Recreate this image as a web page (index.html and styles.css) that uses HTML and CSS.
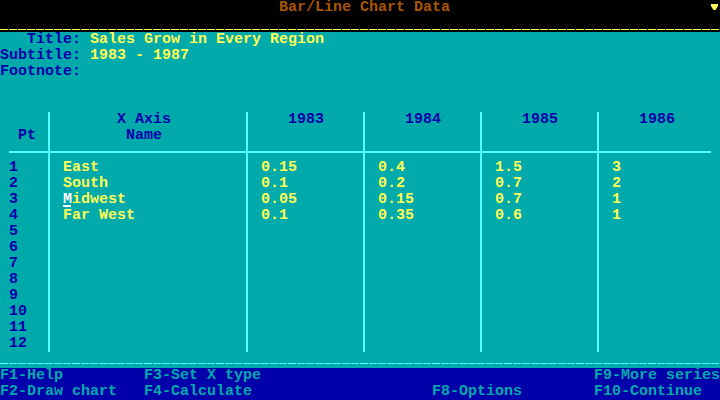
FILE: index.html
```
<!DOCTYPE html>
<html>
<head>
<meta charset="utf-8">
<link rel="stylesheet" href="styles.css">
</head>
<body>
<div class="screen">
  <header class="topbar">
    <div class="line title-line"><span class="app-title">                               Bar/Line Chart Data</span><svg class="more-arrow" width="9" height="16" viewBox="0 0 9 16"><path d="M0 4 H7 V6 L4.5 10 H2.5 L0 6 Z" fill="#ffff55"/></svg></div>
    <div class="line dash-yellow"></div>
  </header>

  <main class="work">
    <section class="fields">
      <div class="line"><span class="lbl">   Title:</span> <span class="val">Sales Grow in Every Region</span></div>
      <div class="line"><span class="lbl">Subtitle:</span> <span class="val">1983 - 1987</span></div>
      <div class="line"><span class="lbl">Footnote:</span></div>
    </section>

    <section class="table">
      <div class="col col-pt">
        <div class="head"><div class="line"></div><div class="line">  Pt</div></div>
        <div class="sep sep-first"></div>
        <div class="body">
          <div class="line"> 1</div><div class="line"> 2</div><div class="line"> 3</div><div class="line"> 4</div>
          <div class="line"> 5</div><div class="line"> 6</div><div class="line"> 7</div><div class="line"> 8</div>
          <div class="line"> 9</div><div class="line"> 10</div><div class="line"> 11</div><div class="line"> 12</div>
        </div>
      </div>
      <div class="col col-name">
        <div class="head"><div class="line txt">       X Axis</div><div class="line txt">        Name</div></div>
        <div class="sep"></div>
        <div class="body data">
          <div class="line txt"> East</div>
          <div class="line txt"> South</div>
          <div class="line txt"> <span class="cursor">M</span>idwest</div>
          <div class="line txt"> Far West</div>
        </div>
      </div>
      <div class="col col-year">
        <div class="head"><div class="line txt">    1983</div><div class="line"></div></div>
        <div class="sep"></div>
        <div class="body data">
          <div class="line txt"> 0.15</div><div class="line txt"> 0.1</div><div class="line txt"> 0.05</div><div class="line txt"> 0.1</div>
        </div>
      </div>
      <div class="col col-year">
        <div class="head"><div class="line txt">    1984</div><div class="line"></div></div>
        <div class="sep"></div>
        <div class="body data">
          <div class="line txt"> 0.4</div><div class="line txt"> 0.2</div><div class="line txt"> 0.15</div><div class="line txt"> 0.35</div>
        </div>
      </div>
      <div class="col col-year">
        <div class="head"><div class="line txt">    1985</div><div class="line"></div></div>
        <div class="sep"></div>
        <div class="body data">
          <div class="line txt"> 1.5</div><div class="line txt"> 0.7</div><div class="line txt"> 0.7</div><div class="line txt"> 0.6</div>
        </div>
      </div>
      <div class="col col-last">
        <div class="head"><div class="line txt">    1986</div><div class="line"></div></div>
        <div class="sep sep-last"></div>
        <div class="body data">
          <div class="line txt"> 3</div><div class="line txt"> 2</div><div class="line txt"> 1</div><div class="line txt"> 1</div>
        </div>
      </div>
    </section>

    <div class="line dash-cyan"></div>
  </main>

  <footer class="keys">
    <span class="k r1 c1">F1-Help</span>
    <span class="k r1 c2">F3-Set X type</span>
    <span class="k r1 c4">F9-More series</span>
    <span class="k r2 c1">F2-Draw chart</span>
    <span class="k r2 c2">F4-Calculate</span>
    <span class="k r2 c3">F8-Options</span>
    <span class="k r2 c4">F10-Continue</span>
  </footer>
</div>
</body>
</html>
```
FILE: styles.css
```
html, body {
  margin: 0;
  padding: 0;
  background: #000;
}
.screen {
  width: 720px;
  height: 400px;
  overflow: hidden;
  display: flex;
  flex-direction: column;
  font-family: "Liberation Mono", "DejaVu Sans Mono", monospace;
  font-weight: bold;
  font-size: 15px;
  line-height: 16px;
}
.line {
  height: 16px;
  white-space: pre;
}
.k {
  white-space: pre;
}
.topbar {
  background: #000;
  height: 32px;
  flex: none;
}
.title-line {
  display: flex;
  justify-content: space-between;
}
.app-title {
  color: #aa5500;
}
.more-arrow {
  display: block;
}
.dash-yellow {
  background: repeating-linear-gradient(90deg, #ffff55 0 8px, transparent 8px 9px) 0 13px / 100% 1px no-repeat;
}
.work {
  background: #00aaaa;
  display: flex;
  flex-direction: column;
  height: 336px;
  flex: none;
}
.fields {
  margin-bottom: 32px;
}
.lbl {
  color: #0000aa;
}
.val {
  color: #ffff55;
}
.table {
  display: flex;
  height: 240px;
  color: #0000aa;
}
.col {
  display: flex;
  flex-direction: column;
  box-sizing: border-box;
}
.col-pt {
  width: 48px;
}
.col-name {
  width: 198px;
  border-left: 2px solid #55ffff;
}
.col-year {
  width: 117px;
  border-left: 2px solid #55ffff;
}
.col-last {
  flex: 1;
  border-left: 2px solid #55ffff;
}
.txt {
  padding-left: 4px;
}
.sep {
  height: 16px;
  background: linear-gradient(#55ffff, #55ffff) 0 7px / 100% 2px no-repeat;
}
.sep-first {
  margin-left: 9px;
}
.sep-last {
  margin-right: 9px;
}
.data {
  color: #ffff55;
}
.cursor {
  display: inline-block;
  height: 16px;
  vertical-align: top;
  color: #ffffff;
  background: linear-gradient(#ffffff, #ffffff) 0 13px / 8px 2px no-repeat;
}
.dash-cyan {
  background: repeating-linear-gradient(90deg, #55ffff 0 8px, transparent 8px 9px) 0 11px / 100% 1px no-repeat;
}
.keys {
  background: #0000aa;
  color: #00aaaa;
  height: 32px;
  flex: none;
  display: grid;
  grid-template-columns: 144px 288px 162px 1fr;
  grid-template-rows: 16px 16px;
}
.r1 { grid-row: 1; }
.r2 { grid-row: 2; }
.c1 { grid-column: 1; }
.c2 { grid-column: 2; }
.c3 { grid-column: 3; }
.c4 { grid-column: 4; }
```
